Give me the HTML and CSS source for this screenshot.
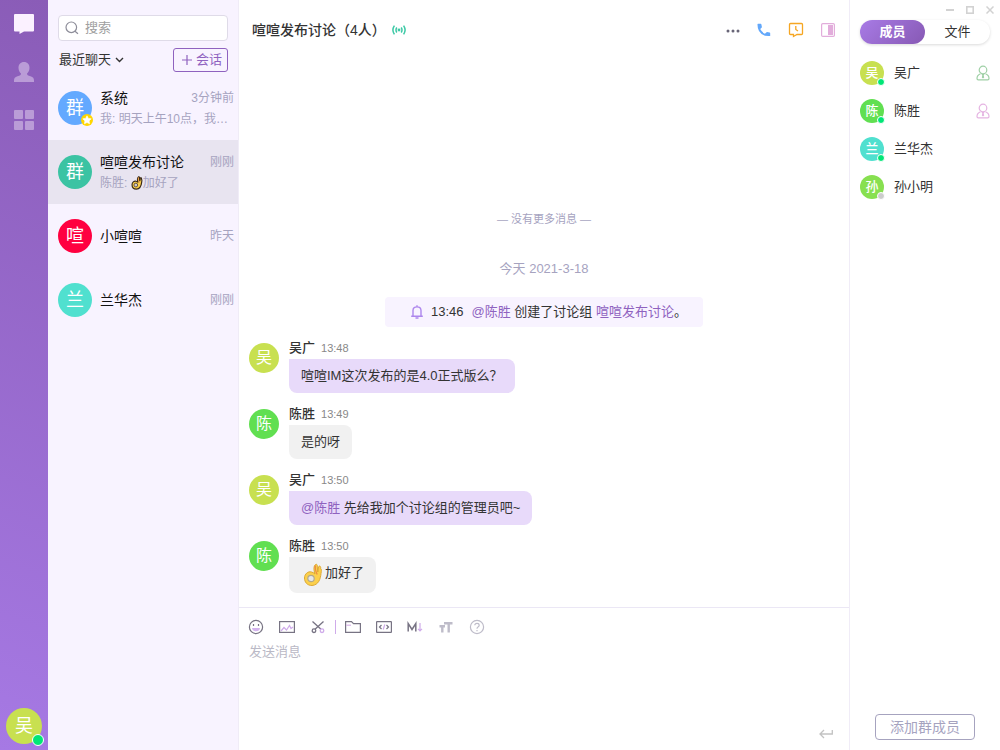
FILE: index.html
```html
<!DOCTYPE html>
<html lang="zh-CN">
<head>
<meta charset="utf-8">
<meta name="viewport" content="width=device-width, initial-scale=1">
<title>喧喧</title>
<link rel="stylesheet" href="styles.css">
</head>
<body>
<svg class="defs" aria-hidden="true">
  <symbol id="ok-hand" viewBox="0 0 20 24">
    <path d="M12 11C10.500 7 10.500 3 12.500 1.500C14 .8 14.500 2 14.300 4L14.800 9L15.500 4C16.200 2.200 18 3 17.700 5.500C18.600 6 18.500 8 18 10.500C17.500 16 15.500 22 9 22.500C4 22.500 1.500 19 1.500 15C1.500 11 5 8 8.500 9C10 9.400 11 10 12 11Z" fill="#fcd04b" stroke="var(--hand-line)" stroke-width="var(--hand-width)"/>
    <path d="M12.500 2.500C11.800 5 12.500 8 14.200 11.500" fill="none" stroke="#ee8b42" stroke-width="1.300"/>
    <circle cx="8" cy="15.500" r="3.200" fill="var(--hand-hole)" stroke="var(--hand-ring)" stroke-width="1.200"/>
  </symbol>
  <symbol id="manager" viewBox="0 0 14 16">
    <g fill="none" stroke="currentColor" stroke-width="1.200" stroke-linejoin="round">
      <circle cx="7" cy="5" r="3.800"/>
      <path d="M4.500 8.800C2 9.800 1 11.200 1 13.500Q1 14.800 2.300 14.800H11.700Q13 14.800 13 13.500C13 11.200 12 9.800 9.500 8.800"/>
    </g>
    <path d="M5.500 9H8.500L7.700 10.500L8.200 12.500L7 13.600L5.800 12.500L6.300 10.500Z" fill="currentColor"/>
  </symbol>
</svg>
<div class="app">
  <nav class="rail" aria-label="主导航">
    <button class="rail-btn active" aria-label="聊天"><svg width="20" height="20" viewBox="0 0 20 20"><path d="M1 0H19Q20 0 20 1V16.500Q20 17.500 19 17.500H10L5.500 20V17.500H1Q0 17.500 0 16.500V1Q0 0 1 0Z" fill="currentColor"/></svg></button>
    <button class="rail-btn" aria-label="联系人"><svg width="20" height="20" viewBox="0 0 20 20"><path d="M10 0C13.500 0 15.600 2.500 15.500 6C15.400 9 14 10.500 13 11.600C13 13.500 14 13.500 16.500 14.300C19 15.200 20 16.200 20 18.500V20H0V18.500C0 16.200 1 15.200 3.500 14.300C6 13.500 7 13.500 7 11.600C6 10.500 4.600 9 4.500 6C4.400 2.500 6.500 0 10 0Z" fill="currentColor"/></svg></button>
    <button class="rail-btn" aria-label="应用"><svg width="20" height="20" viewBox="0 0 20 20" fill="currentColor"><rect width="9" height="9" rx="1"/><rect x="11" width="9" height="9" rx="1"/><rect y="11" width="9" height="9" rx="1"/><rect x="11" y="11" width="9" height="9" rx="1"/></svg></button>
    <button class="avatar avatar-xl wu me" aria-label="吴广">吴<span class="status"></span></button>
  </nav>

  <aside class="chats">
    <label class="search">
      <svg width="14" height="14" viewBox="0 0 14 14" fill="none" stroke="#8d8d99" stroke-width="1.200"><circle cx="6.300" cy="6.300" r="5.300"/><path d="M10 10.200L13 12.800"/></svg>
      <input type="search" placeholder="搜索" aria-label="搜索">
    </label>
    <div class="chats-bar">
      <button class="recent">最近聊天<svg width="9" height="6" viewBox="0 0 9 6" fill="none" stroke="currentColor" stroke-width="1.400"><path d="M1 1L4.500 4.500L8 1"/></svg></button>
      <button class="new-chat"><svg width="10" height="10" viewBox="0 0 10 10" stroke="currentColor" stroke-width="1.200"><path d="M5 0V10M0 5H10"/></svg>会话</button>
    </div>
    <ul class="chat-list">
      <li class="chat">
        <span class="avatar avatar-lg system">群<span class="star"><svg width="10" height="10" viewBox="0 0 10 10"><path d="M5 .8L6.300 3.400L9.200 3.800L7.100 5.900L7.600 8.800L5 7.500L2.400 8.800L2.900 5.900L.8 3.800L3.700 3.400Z" fill="#fff" stroke="#fff" stroke-width=".6" stroke-linejoin="round"/></svg></span></span>
        <div class="chat-text">
          <div class="chat-top"><span class="chat-name">系统</span><time>3分钟前</time></div>
          <p>我: 明天上午10点，我…</p>
        </div>
      </li>
      <li class="chat selected">
        <span class="avatar avatar-lg group">群</span>
        <div class="chat-text">
          <div class="chat-top"><span class="chat-name">喧喧发布讨论</span><time>刚刚</time></div>
          <p>陈胜: <svg class="hand-small" role="img" aria-label="OK"><use href="#ok-hand"/></svg>加好了</p>
        </div>
      </li>
      <li class="chat">
        <span class="avatar avatar-lg xuan">喧</span>
        <div class="chat-text"><div class="chat-top"><span class="chat-name">小喧喧</span><time>昨天</time></div></div>
      </li>
      <li class="chat">
        <span class="avatar avatar-lg lan">兰</span>
        <div class="chat-text"><div class="chat-top"><span class="chat-name">兰华杰</span><time>刚刚</time></div></div>
      </li>
    </ul>
  </aside>

  <main class="room">
    <header class="room-head">
      <h1>喧喧发布讨论（4人）</h1>
      <svg width="14" height="10" viewBox="0 0 14 10" fill="none" stroke="#3dc9a6" stroke-width="1.500"><circle cx="7" cy="5" r="1.400" fill="#3dc9a6" stroke="none"/><path d="M4.800 2.500Q3.200 5 4.800 7.500M9.200 2.500Q10.800 5 9.200 7.500M2.400 .6Q-.6 5 2.400 9.400M11.600 .6Q14.600 5 11.600 9.400"/></svg>
      <div class="room-tools">
        <button aria-label="更多"><svg width="14" height="14" viewBox="0 0 14 14" fill="#686577"><circle cx="2" cy="8" r="1.500"/><circle cx="7" cy="8" r="1.500"/><circle cx="12" cy="8" r="1.500"/></svg></button>
        <button aria-label="通话"><svg width="14" height="14" viewBox="0 0 14 14"><path d="M1 .8H3.700Q4.300 .8 4.400 1.400L4.900 3.900Q5 4.400 4.600 4.700L3.200 6.100Q4.800 9.200 7.900 10.800L9.300 9.400Q9.600 9 10.100 9.100L12.600 9.600Q13.200 9.700 13.200 10.300V13Q5.500 13.700 2 8Q.4 5 .5 1.300Q.5 .8 1 .8Z" fill="#63a8fb"/></svg></button>
        <button aria-label="历史消息"><svg width="16" height="16" viewBox="0 0 16 16" fill="none" stroke="#f5a623" stroke-width="1.300"><path d="M2.500 1.500H13.500Q14.500 1.500 14.500 2.500V11.500Q14.500 12.500 13.500 12.500H9L5.500 14.500V12.500H2.500Q1.500 12.500 1.500 11.500V2.500Q1.500 1.500 2.500 1.500Z"/><path d="M7.800 4V7.500L10 9"/></svg></button>
        <button aria-label="侧边栏"><svg width="14" height="14" viewBox="0 0 14 14"><rect x=".6" y=".6" width="12.800" height="12.800" rx="1.200" fill="none" stroke="#e2addb" stroke-width="1.200"/><rect x="7" y="2" width="5" height="10" fill="#e2addb"/></svg></button>
      </div>
    </header>

    <section class="messages" aria-label="消息">
      <p class="no-more">— 没有更多消息 —</p>
      <p class="date">今天 2021-3-18</p>
      <div class="notice">
        <svg width="12" height="14" viewBox="0 0 12 14" fill="none" stroke="#ad86ed" stroke-width="1.400"><path d="M.2 11.300H11.800M2 11.300V5.500Q2 1.900 6 1.900T10 5.500V11.300M6 .2V2M4.500 13H7.500"/></svg>
        <time>13:46</time>
        <p><a href="#chensheng">@陈胜</a> 创建了讨论组 <a href="#room">喧喧发布讨论</a>。</p>
      </div>
      <article class="message">
        <span class="avatar avatar-md wu">吴</span>
        <div class="message-body"><div class="author"><b>吴广</b><time>13:48</time></div><p class="bubble mine">喧喧IM这次发布的是4.0正式版么？</p></div>
      </article>
      <article class="message">
        <span class="avatar avatar-md chen">陈</span>
        <div class="message-body"><div class="author"><b>陈胜</b><time>13:49</time></div><p class="bubble">是的呀</p></div>
      </article>
      <article class="message">
        <span class="avatar avatar-md wu">吴</span>
        <div class="message-body"><div class="author"><b>吴广</b><time>13:50</time></div><p class="bubble mine"><a href="#chensheng">@陈胜</a> 先给我加个讨论组的管理员吧~</p></div>
      </article>
      <article class="message">
        <span class="avatar avatar-md chen">陈</span>
        <div class="message-body"><div class="author"><b>陈胜</b><time>13:50</time></div><p class="bubble with-hand"><svg class="hand" role="img" aria-label="OK"><use href="#ok-hand"/></svg>加好了</p></div>
      </article>
    </section>

    <form class="composer">
      <div class="tools">
        <button type="button" aria-label="表情"><svg width="16" height="16" viewBox="0 0 16 16" fill="none" stroke="#777383" stroke-width="1.200"><circle cx="8" cy="8" r="6.600"/><path d="M5.500 5V7M10.500 5V7"/><path d="M4 9H12Q11.500 12.300 8 12.300T4 9Z" fill="#d4b3ee" stroke="none"/></svg></button>
        <button type="button" aria-label="图片"><svg width="16" height="16" viewBox="0 0 16 16" fill="none" stroke="#777383" stroke-width="1.200"><rect x=".6" y="2.600" width="14.800" height="10.800"/><path d="M2 12L5 8.500L7.500 11L10.500 6.500L12 9.500L14 8" stroke="#cfabea"/></svg></button>
        <button type="button" aria-label="截图"><svg width="16" height="16" viewBox="0 0 16 16" fill="none" stroke="#777383" stroke-width="1.300"><path d="M2.500 2.500L11 10.300M13.500 2.500L5 10.300"/><circle cx="4" cy="11.700" r="1.800"/><circle cx="12" cy="11.700" r="1.800" stroke="#cfabea"/></svg></button>
        <span class="divider"></span>
        <button type="button" aria-label="文件"><svg width="16" height="16" viewBox="0 0 16 16" fill="none" stroke="#777383" stroke-width="1.200"><path d="M.6 2.600H6.500L8.500 4.600H15.400V13.400H.6Z"/><path d="M1.200 6.200H6" stroke="#d9b5e8"/></svg></button>
        <button type="button" aria-label="代码"><svg width="16" height="16" viewBox="0 0 16 16" fill="none" stroke="#777383" stroke-width="1.200"><rect x=".6" y="2.600" width="14.800" height="10.800" rx=".5"/><path d="M5.500 6L3.500 8L5.500 10M10.500 6L12.500 8L10.500 10"/><path d="M8.800 5.500L7.200 10.500" stroke="#cfabea"/></svg></button>
        <button type="button" aria-label="Markdown"><svg width="16" height="16" viewBox="0 0 16 16" fill="none" stroke="#777383" stroke-width="1.500"><path d="M1.200 12.500V4.500L5 10.500L8.800 4.500V12.500"/><path d="M13 4V11.500M11 9.800L13 11.800L15 9.800" stroke="#cfabea" stroke-width="1.200"/></svg></button>
        <button type="button" aria-label="字体"><svg width="16" height="16" viewBox="0 0 16 16" fill="none" stroke="#bebcc9" stroke-width="2.400"><path d="M6 4.200H14.500M10.700 4V13.500M1.500 7.200H7M4.300 7V13.500"/></svg></button>
        <button type="button" aria-label="帮助"><svg width="16" height="16" viewBox="0 0 16 16" fill="none" stroke="#bebcc9" stroke-width="1.200"><circle cx="8" cy="8" r="6.600"/><path d="M5.800 6.300Q5.900 4.300 8 4.300T10.200 6.200Q10.200 7.200 9 7.900Q8 8.500 8 9.700M8 11V12.300"/></svg></button>
      </div>
      <textarea placeholder="发送消息" aria-label="发送消息"></textarea>
      <button class="send" aria-label="发送"><svg width="14" height="10" viewBox="0 0 14 10" fill="none" stroke="#c2c2c2" stroke-width="1.300"><path d="M13.300 1V5H1M5 1L1 5L5 9"/></svg></button>
    </form>
  </main>

  <aside class="side">
    <div class="window-tools">
      <button aria-label="最小化"><svg width="8" height="8" viewBox="0 0 8 8"><path d="M0 4H8" stroke="#d2d2d2" stroke-width="2"/></svg></button>
      <button aria-label="最大化"><svg width="8" height="8" viewBox="0 0 8 8"><rect x=".8" y=".8" width="6.400" height="6.400" fill="none" stroke="#d2d2d2" stroke-width="1.600"/></svg></button>
      <button aria-label="关闭"><svg width="8" height="8" viewBox="0 0 8 8"><path d="M.5 .5L7.500 7.500M7.500 .5L.5 7.500" stroke="#d2d2d2" stroke-width="1.500"/></svg></button>
    </div>
    <div class="tabs" role="tablist">
      <button role="tab" aria-selected="true" class="current">成员</button>
      <button role="tab" aria-selected="false">文件</button>
    </div>
    <ul class="members">
      <li><span class="avatar avatar-sm wu">吴<span class="status"></span></span><span class="member-name">吴广</span><svg class="role owner" role="img" aria-label="群主"><use href="#manager"/></svg></li>
      <li><span class="avatar avatar-sm chen">陈<span class="status"></span></span><span class="member-name">陈胜</span><svg class="role admin" role="img" aria-label="管理员"><use href="#manager"/></svg></li>
      <li><span class="avatar avatar-sm lan">兰<span class="status"></span></span><span class="member-name">兰华杰</span></li>
      <li><span class="avatar avatar-sm sun">孙<span class="status offline"></span></span><span class="member-name">孙小明</span></li>
    </ul>
    <button class="add-member">添加群成员</button>
  </aside>
</div>
</body>
</html>
```

FILE: styles.css
```css
* { box-sizing: border-box; }
body, h1, p, ul { margin: 0; padding: 0; }
ul { list-style: none; }
body {
  font: 13px/20px "Liberation Sans", "Noto Sans CJK SC", sans-serif;
  color: #333;
  background: #fff;
}
button, input, textarea { font: inherit; color: inherit; }
button { border: 0; padding: 0; background: none; cursor: pointer; }
a { color: #8f62bf; text-decoration: none; }
svg { display: block; flex: none; }
.defs { position: absolute; width: 0; height: 0; }

.app {
  display: grid;
  grid-template-columns: 48px 190px minmax(0, 1fr) 151px;
  height: 100vh;
}

/* Avatars */
.avatar {
  position: relative;
  flex: none;
  display: flex;
  align-items: center;
  justify-content: center;
  border-radius: 50%;
  color: #fff;
}
.avatar-sm { width: 24px; height: 24px; font-size: 13px; font-weight: 500; }
.avatar-md { width: 30px; height: 30px; font-size: 16px; }
.avatar-lg { width: 34px; height: 34px; font-size: 18px; }
.avatar-xl { width: 36px; height: 36px; font-size: 18px; }
.wu { background: #c8e050; }
.chen { background: #61df51; }
.lan { background: #50e0cf; }
.sun { background: #87e050; }
.system { background: #63a9ff; }
.group { background: #3bc3a3; }
.xuan { background: #ff0040; }
.status {
  position: absolute;
  right: -1px;
  bottom: -1px;
  width: 8px;
  height: 8px;
  border: 1px solid #fff;
  border-radius: 50%;
  background: #00e676;
}
.status.offline { background: #ccc; }
.star {
  position: absolute;
  right: -1px;
  bottom: -1px;
  display: grid;
  place-items: center;
  width: 12px;
  height: 12px;
  border-radius: 50%;
  background: #ffd600;
}

/* Left rail */
.rail {
  display: flex;
  flex-direction: column;
  align-items: center;
  gap: 28px;
  padding: 14px 0 6px;
  background: linear-gradient(200deg, #8a5cb7, #a679e4);
}
.rail-btn { color: #ba9cd7; }
.rail-btn.active { color: #fbf1ff; }
.me { margin-top: auto; }
.me .status { right: -2px; bottom: -2px; width: 12px; height: 12px; }

/* Chat list */
.chats { background: #f8f3ff; padding-top: 15px; }
.search {
  display: flex;
  align-items: center;
  gap: 6px;
  height: 26px;
  margin: 0 10px;
  padding: 0 6px;
  border: 1px solid #dfdbe8;
  border-radius: 4px;
  background: #fff;
}
.search input { flex: 1; min-width: 0; padding: 0; border: 0; outline: 0; background: none; }
.search input::placeholder { color: #a0a0a0; }
.chats-bar {
  display: flex;
  align-items: center;
  justify-content: space-between;
  margin: 7px 10px 4px;
}
.recent { display: flex; align-items: center; gap: 4px; padding-left: 1px; }
.new-chat {
  display: flex;
  align-items: center;
  gap: 4px;
  height: 24px;
  padding: 0 5px 0 8px;
  border: 1px solid #8f62bf;
  border-radius: 3px;
  color: #8f62bf;
}
.chat { display: flex; align-items: center; gap: 8px; height: 64px; padding: 0 4px 0 10px; }
.chat.selected { background: #e8e4f0; }
.chat-text { flex: 1; min-width: 0; }
.chat-top { display: flex; justify-content: space-between; align-items: center; }
.chat-name { font-size: 14px; color: #111; }
.chat time, .chat p { font-size: 12px; color: #a6a3bf; }
.chat p {
  margin-top: 1px;
  overflow: hidden;
  white-space: nowrap;
  text-overflow: ellipsis;
}
.hand-small {
  --hand-line: #3a2a18;
  --hand-width: 2px;
  --hand-hole: #cfc8cf;
  --hand-ring: #3a2a18;
  display: inline-block;
  width: 12px;
  height: 14px;
  vertical-align: -3px;
}

/* Conversation */
.room {
  display: flex;
  flex-direction: column;
  min-width: 0;
  border-left: 1px solid #f0ecf7;
}
.room-head {
  display: flex;
  align-items: center;
  gap: 6px;
  height: 60px;
  padding: 0 14px 0 13px;
}
.room-head h1 { font-size: 14px; font-weight: 500; }
.room-tools { display: flex; align-items: center; gap: 17px; margin-left: auto; }
.messages {
  flex: 1;
  min-height: 0;
  display: flex;
  flex-direction: column;
  justify-content: flex-end;
  gap: 11px;
  padding: 0 10px 14px;
  overflow: hidden;
}
.no-more, .date { text-align: center; color: #a6a3bf; }
.no-more { font-size: 11px; margin-bottom: 19px; }
.date { margin-bottom: 7px; }
.notice {
  display: flex;
  align-items: center;
  align-self: center;
  gap: 8px;
  height: 30px;
  padding: 0 16px 0 26px;
  border-radius: 4px;
  background: #f8f3ff;
}
.message { display: flex; gap: 10px; }
.message .avatar { margin-top: 5px; }
.author { display: flex; align-items: center; gap: 6px; height: 19px; margin-bottom: 2px; }
.author b { font-weight: 500; }
.author time { font-size: 11px; color: #888; }
.bubble {
  width: fit-content;
  padding: 7px 12px;
  border-radius: 0 8px 8px 8px;
  background: #f1f1f1;
}
.bubble.mine { background: #e8dafa; }
.bubble.with-hand { display: flex; gap: 2px; padding: 6px 12px 6px 14px; }
.hand {
  --hand-line: #dca936;
  --hand-width: 1px;
  --hand-hole: #e5e7e9;
  --hand-ring: #b2a98c;
  width: 20px;
  height: 24px;
}

/* Composer */
.composer {
  display: flex;
  flex-direction: column;
  height: 143px;
  padding: 11px 16px 11px 9px;
  border-top: 1px solid #ebe7f5;
}
.tools { display: flex; align-items: center; gap: 15px; height: 16px; }
.divider { width: 1px; height: 14px; margin: 0 -6px; background: #cfabea; }
.composer textarea {
  flex: 1;
  margin-top: 7px;
  padding: 0 1px;
  border: 0;
  outline: 0;
  resize: none;
}
.composer textarea::placeholder { color: #bab9c6; }
.send { align-self: flex-end; }

/* Members panel */
.side {
  display: flex;
  flex-direction: column;
  padding: 6px 10px 10px;
  border-left: 1px solid #f0ecf7;
}
.window-tools { display: flex; justify-content: flex-end; gap: 12px; height: 8px; margin-right: -4px; }
.tabs {
  display: grid;
  grid-template-columns: 1fr 1fr;
  height: 24px;
  margin-top: 6px;
  border-radius: 12px;
  box-shadow: 0 1px 3px rgba(0, 0, 0, 0.15);
}
.tabs button { border-radius: 12px; }
.tabs .current {
  color: #fff;
  font-weight: 700;
  background: linear-gradient(135deg, #a87be6, #8759b4);
}
.members { flex: 1; padding-top: 10px; }
.members li { display: flex; align-items: center; gap: 10px; height: 38px; }
.role { width: 14px; height: 16px; margin-left: auto; }
.owner { color: #9fd0a6; }
.admin { color: #e5b4e2; }
.add-member {
  align-self: center;
  width: 100px;
  height: 26px;
  border: 1px solid #a6a3bf;
  border-radius: 4px;
  font-size: 14px;
  color: #a6a3bf;
}
```
